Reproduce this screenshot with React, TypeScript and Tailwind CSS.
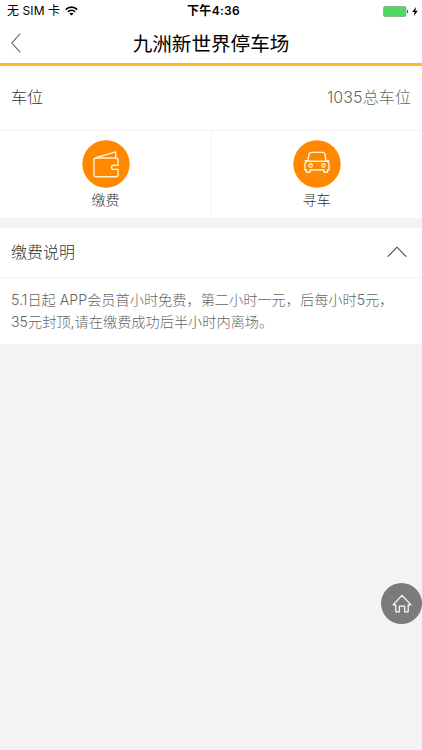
import React, { useState } from 'react';

function StatusBar() {
  return (
    <div className="grid h-[22px] grid-cols-3 items-center pl-[7px] pr-1 text-[12px] text-black">
      <div className="flex items-center gap-[5px]">
        <span className="whitespace-nowrap text-[12px] tracking-[0.1px]">无 SIM 卡</span>
        <svg width="13" height="10" viewBox="0 0 13 10" fill="none" stroke="#000" strokeWidth="1.7">
          <path d="M0.8 3.6C4 0.4 9 0.4 12.2 3.6" />
          <path d="M2.9 5.9C5 3.9 8 3.9 10.1 5.9" />
          <path d="M6.5 9.6L4.4 7.5C5.6 6.5 7.4 6.5 8.6 7.5Z" fill="#000" stroke="none" />
        </svg>
      </div>
      <div className="whitespace-nowrap pl-[2px] text-center font-semibold tracking-[0.3px]">下午4:36</div>
      <div className="flex items-center justify-end gap-[3px]">
        <svg width="26" height="11" viewBox="0 0 26 11">
          <rect x="0.5" y="0.5" width="22.5" height="10" rx="1.5" fill="#4cd964" stroke="#7fae87" strokeWidth="0.8" />
          <path d="M24 3.8C25.3 4.2 25.3 6.8 24 7.2Z" fill="#222" />
        </svg>
        <svg width="6" height="9" viewBox="0 0 6 9">
          <path d="M3.9 0L0.3 5H2.6L1.9 9L5.8 3.8H3.4Z" fill="#000" />
        </svg>
      </div>
    </div>
  );
}

function WalletIcon() {
  return (
    <svg width="48" height="48" viewBox="0 0 48 48" fill="none" stroke="#fff3d6" strokeWidth="1.4" strokeLinejoin="round" strokeLinecap="round">
      <circle cx="24" cy="24" r="23.7" fill="#ff8800" stroke="none" />
      <path d="M36 25.3V20Q36 18 34 18H14Q12 18 12 20V34.8Q12 36.8 14 36.8H34Q36 36.8 36 34.8V29.4" />
      <path d="M14.5 17.5L33.7 11.8V18" />
      <path d="M36 25.3H31.2Q29.5 25.3 29.5 27.3Q29.5 29.4 31.2 29.4H36" />
    </svg>
  );
}

function CarIcon() {
  return (
    <svg width="48" height="48" viewBox="0 0 48 48" fill="none" stroke="#fff3d6" strokeWidth="1.4" strokeLinejoin="round" strokeLinecap="round">
      <circle cx="24" cy="24" r="23.7" fill="#ff8800" stroke="none" />
      <path d="M15 21.2L15.8 14.8Q16.2 12.4 18.6 12.4H29.4Q31.8 12.4 32.2 14.8L33 21.2" />
      <path d="M14.2 21.2H33.8Q36 21.6 36 24V30H34.5V32.2H31V30H17V32.2H13.5V30H12V24Q12 21.6 14.2 21.2Z" />
      <path d="M14.8 20.6H12.2M33.2 20.6H35.8" />
      <circle cx="17.6" cy="25.5" r="1.7" />
      <circle cx="30.4" cy="25.5" r="1.7" />
    </svg>
  );
}

const actions = [
  { label: '缴费', Icon: WalletIcon },
  { label: '寻车', Icon: CarIcon },
];

export default function App() {
  const [open, setOpen] = useState(true);

  return (
    <div className="relative h-screen overflow-hidden bg-[#f3f3f3] font-['Inter','Noto_Sans_CJK_SC',sans-serif] font-light text-[#333]">
      <header className="h-[66px] border-b-[3px] border-[#f5bc2e] bg-white font-normal">
        <StatusBar />
        <div className="grid h-[41px] grid-cols-[40px_1fr_40px] items-center">
          <button type="button" aria-label="返回" className="pl-[11px] pt-px">
            <svg width="10" height="20" viewBox="0 0 10 20" fill="none" stroke="#666" strokeWidth="1.1">
              <path d="M9.3 0.7L0.8 10L9.3 19.3" />
            </svg>
          </button>
          <h1 className="whitespace-nowrap pt-[3px] text-center text-[19.6px] leading-[38px] text-black">九洲新世界停车场</h1>
        </div>
      </header>

      <section className="bg-white">
        <div className="flex h-[65px] items-center justify-between border-b border-[#f3f3f3] px-[11px] pb-[3px] text-[16px]">
          <span>车位</span>
          <span className="tracking-[0.1px] text-[#666]">1035总车位</span>
        </div>
        <div className="grid h-[87px] grid-cols-[212px_1fr]">
          {actions.map(({ label, Icon }) => (
            <button key={label} type="button" className="flex flex-col items-center border-r border-[#f3f3f3] pt-[9px] last:border-r-0 last:pr-[1px]">
              <Icon />
              <span className="mt-px text-[14px] leading-[21px]">{label}</span>
            </button>
          ))}
        </div>
      </section>

      <section className="mt-[10px] bg-white">
        <button
          type="button"
          className="flex h-[50px] w-full items-center justify-between border-b border-[#f3f3f3] pb-px pl-[11px] pr-[15px] text-[16px]"
          onClick={() => setOpen(!open)}
        >
          <span>缴费说明</span>
          <svg className={open ? '' : 'rotate-180'} width="20" height="12" viewBox="0 0 20 12" fill="none" stroke="#444" strokeWidth="1.1">
            <path d="M0.8 10.7L10 1.2L19.2 10.7" />
          </svg>
        </button>
        {open && (
          <p className="h-[66px] whitespace-nowrap pl-[11px] pt-[11px] text-[14.2px] leading-[22px] text-[#666]">
            5.1日起 APP会员首小时免费，第二小时一元，后每小时5元，
            <br />
            35元封顶,请在缴费成功后半小时内离场。
          </p>
        )}
      </section>

      <button type="button" aria-label="首页" className="absolute right-0 top-[583px] flex size-[41px] items-center justify-center rounded-full bg-[#7b7b7b]">
        <svg width="20" height="20" viewBox="0 0 20 20" fill="none" stroke="#fff" strokeWidth="1.2" strokeLinejoin="round">
          <path d="M10 1.4L1 10.8H3.8V17.8H7.3V12.2H12.7V17.8H16.2V10.8H19Z" />
        </svg>
      </button>
    </div>
  );
}
